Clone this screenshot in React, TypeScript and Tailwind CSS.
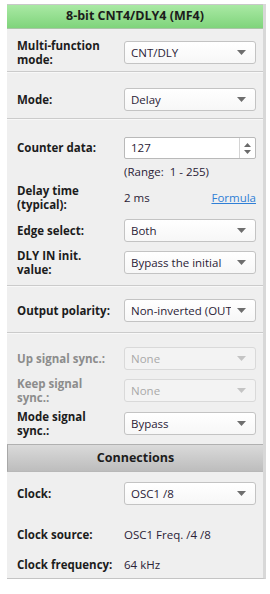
import React from "react";

const font = { fontFamily: '"Open Sans", "Noto Sans", sans-serif' };

function Arrow({ disabled }: { disabled?: boolean }) {
  return (
    <svg width="9" height="5" viewBox="0 0 9 5" className="shrink-0 ml-[6px]">
      <path d="M0 0 H9 L4.5 5 Z" fill={disabled ? "#c4c4c4" : "#6e6e6e"} />
    </svg>
  );
}

function Select({ value, disabled }: { value: string; disabled?: boolean }) {
  return (
    <div
      className={`w-[132px] h-[23px] rounded-[3px] border flex items-center pl-[6px] pr-[9px] ${
        disabled
          ? "border-[#d9d9d9] bg-[#f3f3f3] text-[#a9a9a9]"
          : "border-[#c3c3c3] bg-gradient-to-b from-white to-[#f7f7f7] text-[#2a2236]"
      }`}
    >
      <span className="flex-1 overflow-hidden whitespace-nowrap text-[11.5px] leading-[16px]">{value}</span>
      <Arrow disabled={disabled} />
    </div>
  );
}

function Label({ children, disabled }: { children: React.ReactNode; disabled?: boolean }) {
  return (
    <div
      className={`w-[107px] shrink-0 text-[11.5px] font-bold leading-[14px] ${
        disabled ? "text-[#8c8c8c]" : "text-[#1c1c1c]"
      }`}
    >
      {children}
    </div>
  );
}

function Sep() {
  return <div className="h-[2px] border-t border-[#cbcbcb] bg-[#f8f8f8]" />;
}

export default function App() {
  return (
    <div className="w-[270px] h-[594px] bg-white pt-[4px] pl-[7px]" style={font}>
      <div className="w-[259px] border-r-[3px] border-[#d8d8d8] bg-[#efefef] border-b border-b-[#c4c4c4]">
        {/* Header */}
        <div className="h-[25px] border-t border-b border-t-[#c8c8c8] border-b-[#a9c4a6] bg-gradient-to-b from-[#a9e9a4] to-[#7fd47b] flex items-center justify-center">
          <span className="text-[12.5px] font-bold text-[#1c1c1c]">8-bit CNT4/DLY4 (MF4)</span>
        </div>

        {/* S1 */}
        <div className="pl-[10px] pt-[12px] pb-[7px]">
          <div className="h-[23px] flex items-center">
            <Label>
              Multi-function
              <br />
              mode:
            </Label>
            <Select value="CNT/DLY" />
          </div>
        </div>
        <Sep />

        {/* S2 */}
        <div className="pl-[10px] pt-[15px] pb-[7px]">
          <div className="h-[23px] flex items-center">
            <Label>Mode:</Label>
            <Select value="Delay" />
          </div>
        </div>
        <Sep />

        {/* S3 */}
        <div className="pl-[10px] pt-[17px] pb-[11px]">
          <div className="h-[22px] flex items-center">
            <Label>Counter data:</Label>
            <div className="w-[132px] h-[22px] rounded-[2px] border border-[#b9b9b9] bg-white flex items-center">
              <span className="flex-1 pl-[6px] text-[11.5px] leading-[16px] text-[#2a2236]">127</span>
              <div className="w-[16px] h-full border-l border-[#d4d4d4] flex flex-col items-center justify-center gap-[3px]">
                <svg width="7" height="4" viewBox="0 0 7 4">
                  <path d="M0 4 L3.5 0 L7 4 Z" fill="#6a6a6a" />
                </svg>
                <svg width="7" height="4" viewBox="0 0 7 4">
                  <path d="M0 0 H7 L3.5 4 Z" fill="#6a6a6a" />
                </svg>
              </div>
            </div>
          </div>
          <div className="h-[12px] mt-[7px] pl-[107px] flex items-center text-[11.5px] text-[#2a2236] whitespace-nowrap">
            (Range:&nbsp; 1 - 255)
          </div>
          <div className="h-[28px] mt-[6px] flex items-center">
            <Label>
              Delay time
              <br />
              (typical):
            </Label>
            <div className="w-[132px] flex items-center justify-between text-[11.5px]">
              <span className="text-[#2a2236]">2 ms</span>
              <span className="text-[#2f7fd6] underline">Formula</span>
            </div>
          </div>
          <div className="h-[23px] mt-[7px] flex items-center">
            <Label>Edge select:</Label>
            <Select value="Both" />
          </div>
          <div className="h-[23px] mt-[9px] flex items-center">
            <Label>
              DLY IN init.
              <br />
              value:
            </Label>
            <Select value="Bypass the initial" />
          </div>
        </div>
        <Sep />

        {/* S4 */}
        <div className="pl-[10px] pt-[12px] pb-[10px]">
          <div className="h-[23px] flex items-center">
            <Label>Output polarity:</Label>
            <Select value="Non-inverted (OUT)" />
          </div>
        </div>
        <Sep />

        {/* S5 */}
        <div className="pl-[10px] pt-[13px] pb-[9px]">
          <div className="h-[23px] flex items-center">
            <Label disabled>Up signal sync.:</Label>
            <Select value="None" disabled />
          </div>
          <div className="h-[23px] mt-[9px] flex items-center">
            <Label disabled>
              Keep signal
              <br />
              sync.:
            </Label>
            <Select value="None" disabled />
          </div>
          <div className="h-[23px] mt-[10px] flex items-center">
            <Label>
              Mode signal
              <br />
              sync.:
            </Label>
            <Select value="Bypass" />
          </div>
        </div>

        {/* Connections */}
        <div className="h-[28px] border-t border-b border-t-[#b0b0b0] border-b-[#b8b8b8] border-l border-l-[#a8a8a8] bg-gradient-to-b from-[#dadada] to-[#bdbdbd] flex items-center justify-center">
          <span className="text-[12.5px] font-bold text-[#1c1c1c]">Connections</span>
        </div>

        {/* S6 */}
        <div className="pl-[10px] pt-[10px] pb-[6px]">
          <div className="h-[23px] flex items-center">
            <Label>Clock:</Label>
            <Select value="OSC1 /8" />
          </div>
          <div className="h-[14px] mt-[23px] flex items-center">
            <Label>Clock source:</Label>
            <span className="text-[11.5px] text-[#2a2236] whitespace-nowrap">OSC1 Freq. /4 /8</span>
          </div>
          <div className="h-[14px] mt-[16px] flex items-center">
            <Label>Clock frequency:</Label>
            <span className="text-[11.5px] text-[#2a2236] whitespace-nowrap">64 kHz</span>
          </div>
        </div>
      </div>
    </div>
  );
}
